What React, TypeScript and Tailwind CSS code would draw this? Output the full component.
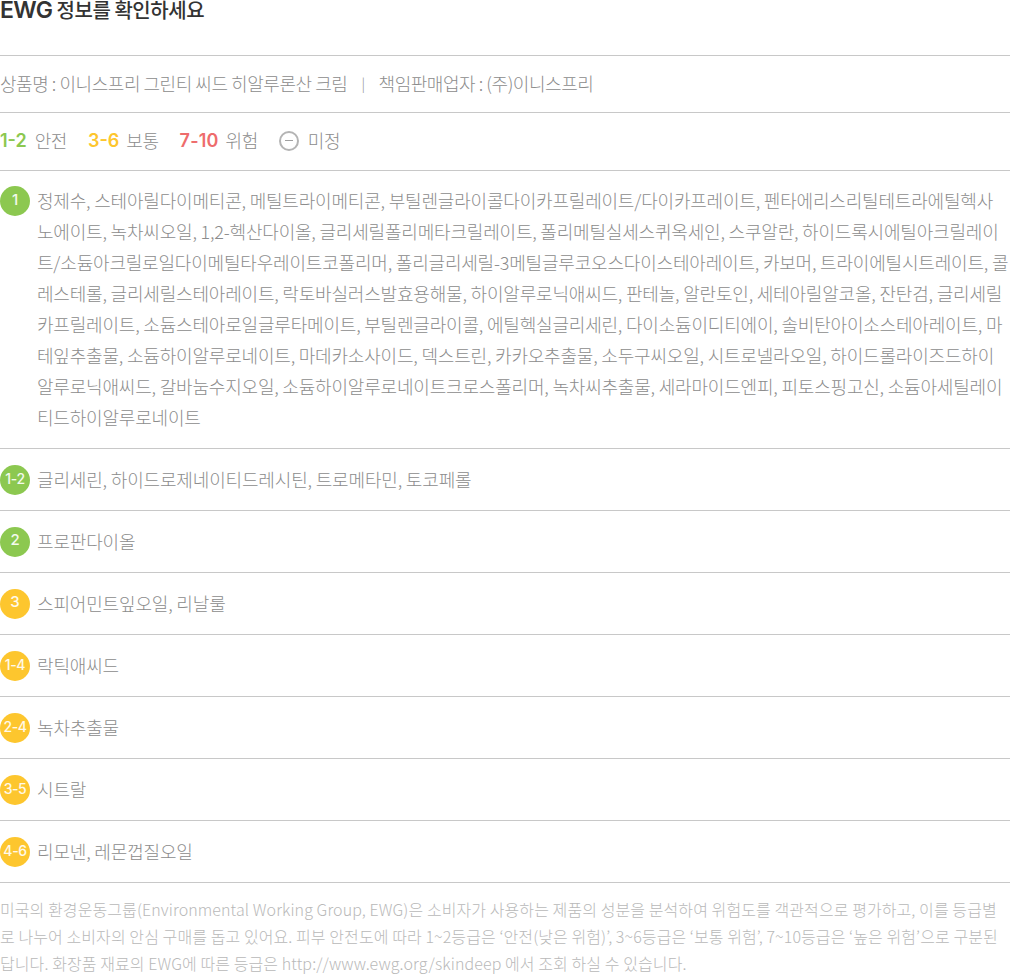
import React from 'react';

const GREEN = 'bg-[#8cc850]';
const YELLOW = 'bg-[#fdc62e]';

const listFirstLine =
  '정제수, 스테아릴다이메티콘, 메틸트라이메티콘, 부틸렌글라이콜다이카프릴레이트/다이카프레이트, 펜타에리스리틸테트라에틸헥사';
const listRest =
  '노에이트, 녹차씨오일, 1,2-헥산다이올, 글리세릴폴리메타크릴레이트, 폴리메틸실세스퀴옥세인, 스쿠알란, 하이드록시에틸아크릴레이트/소듐아크릴로일다이메틸타우레이트코폴리머, 폴리글리세릴-3메틸글루코오스다이스테아레이트, 카보머, 트라이에틸시트레이트, 콜레스테롤, 글리세릴스테아레이트, 락토바실러스발효용해물, 하이알루로닉애씨드, 판테놀, 알란토인, 세테아릴알코올, 잔탄검, 글리세릴카프릴레이트, 소듐스테아로일글루타메이트, 부틸렌글라이콜, 에틸헥실글리세린, 다이소듐이디티에이, 솔비탄아이소스테아레이트, 마테잎추출물, 소듐하이알루로네이트, 마데카소사이드, 덱스트린, 카카오추출물, 소두구씨오일, 시트로넬라오일, 하이드롤라이즈드하이알루로닉애씨드, 갈바눔수지오일, 소듐하이알루로네이트크로스폴리머, 녹차씨추출물, 세라마이드엔피, 피토스핑고신, 소듐아세틸레이티드하이알루로네이트';

const rows = [
  { grade: '1-2', color: GREEN, text: '글리세린, 하이드로제네이티드레시틴, 트로메타민, 토코페롤' },
  { grade: '2', color: GREEN, text: '프로판다이올' },
  { grade: '3', color: YELLOW, text: '스피어민트잎오일, 리날룰' },
  { grade: '1-4', color: YELLOW, text: '락틱애씨드' },
  { grade: '2-4', color: YELLOW, text: '녹차추출물' },
  { grade: '3-5', color: YELLOW, text: '시트랄' },
  { grade: '4-6', color: YELLOW, text: '리모넨, 레몬껍질오일' },
];

const Badge = ({ grade, color }: { grade: string; color: string }) => (
  <span
    className={`${color} flex h-[30px] w-[30px] shrink-0 items-center justify-center rounded-full pb-[2px] font-['Inter',sans-serif] text-white/90 ${
      grade.length > 1 ? 'text-[14px] font-medium tracking-[-0.4px]' : 'text-[15px] font-medium'
    }`}
  >
    {grade}
  </span>
);

export default function App() {
  return (
    <div className="w-[1010px] bg-white font-['Noto_Sans_CJK_KR','Noto_Sans',sans-serif] text-[#8c8c8c]">
      <h1 className="h-[55px] text-[20px] leading-[20px] font-medium tracking-[-0.45px] text-[#333]">
        <span className="font-['Inter',sans-serif] text-[23px] font-semibold tracking-[-0.6px]">EWG</span> 정보를 확인하세요
      </h1>

      <div className="flex h-[57px] items-center border-t border-[#c8c8c8] pb-[2px] text-[18px] font-light tracking-[-0.45px]">
        <span>상품명 : 이니스프리 그린티 씨드 히알루론산 크림</span>
        <span className="mx-[14px] text-[14px]">|</span>
        <span>책임판매업자 : (주)이니스프리</span>
      </div>

      <div className="flex h-[58px] items-center border-t border-[#c8c8c8] pb-[2px] text-[18px] font-light tracking-[-0.45px]">
        <span className="font-['Inter',sans-serif] font-semibold tracking-normal text-[#8cc850]">1-2</span>
        <span className="ml-2">안전</span>
        <span className="ml-[21px] font-['Inter',sans-serif] font-semibold tracking-normal text-[#fdc62e]">3-6</span>
        <span className="ml-[7px]">보통</span>
        <span className="ml-[21px] font-['Inter',sans-serif] font-semibold tracking-[0.2px] text-[#ee6c6c]">7-10</span>
        <span className="ml-[7px]">위험</span>
        <span className="ml-[21px] flex h-5 w-5 items-center justify-center rounded-full border-2 border-[#b4b4b4]">
          <span className="h-[1.5px] w-2 bg-[#a0a0a0]" />
        </span>
        <span className="ml-[9px]">미정</span>
      </div>

      <div className="flex gap-[7px] border-t border-[#c8c8c8] pt-[14px] pb-[15px]">
        <span className="mt-px">
          <Badge grade="1" color={GREEN} />
        </span>
        <p className="text-[18px] leading-[31px] font-light tracking-[-0.19px] [word-break:break-all]">
          {listFirstLine}
          <br />
          {listRest}
        </p>
      </div>

      {rows.map((row) => (
        <div key={row.grade} className="flex h-[62px] items-center gap-[7px] border-t border-[#c8c8c8]">
          <Badge grade={row.grade} color={row.color} />
          <span className="text-[18px] font-light tracking-[-0.16px]">{row.text}</span>
        </div>
      ))}

      <p className="border-t border-[#c8c8c8] pt-[13px] text-[16px] leading-[27px] font-light tracking-[0.09px] text-[#b9b9b9] [word-break:break-all]">
        미국의 환경운동그룹(Environmental Working Group, EWG)은 소비자가 사용하는 제품의 성분을 분석하여 위험도를 객관적으로 평가하고, 이를 등급별로 나누어 소비자의 안심 구매를 돕고 있어요. 피부 안전도에 따라 1~2등급은 ‘안전(낮은 위험)’, 3~6등급은 ‘보통 위험’, 7~10등급은 ‘높은 위험’으로 구분된답니다. 화장품 재료의 EWG에 따른 등급은 http://www.ewg.org/skindeep 에서 조회 하실 수 있습니다.
      </p>
    </div>
  );
}
